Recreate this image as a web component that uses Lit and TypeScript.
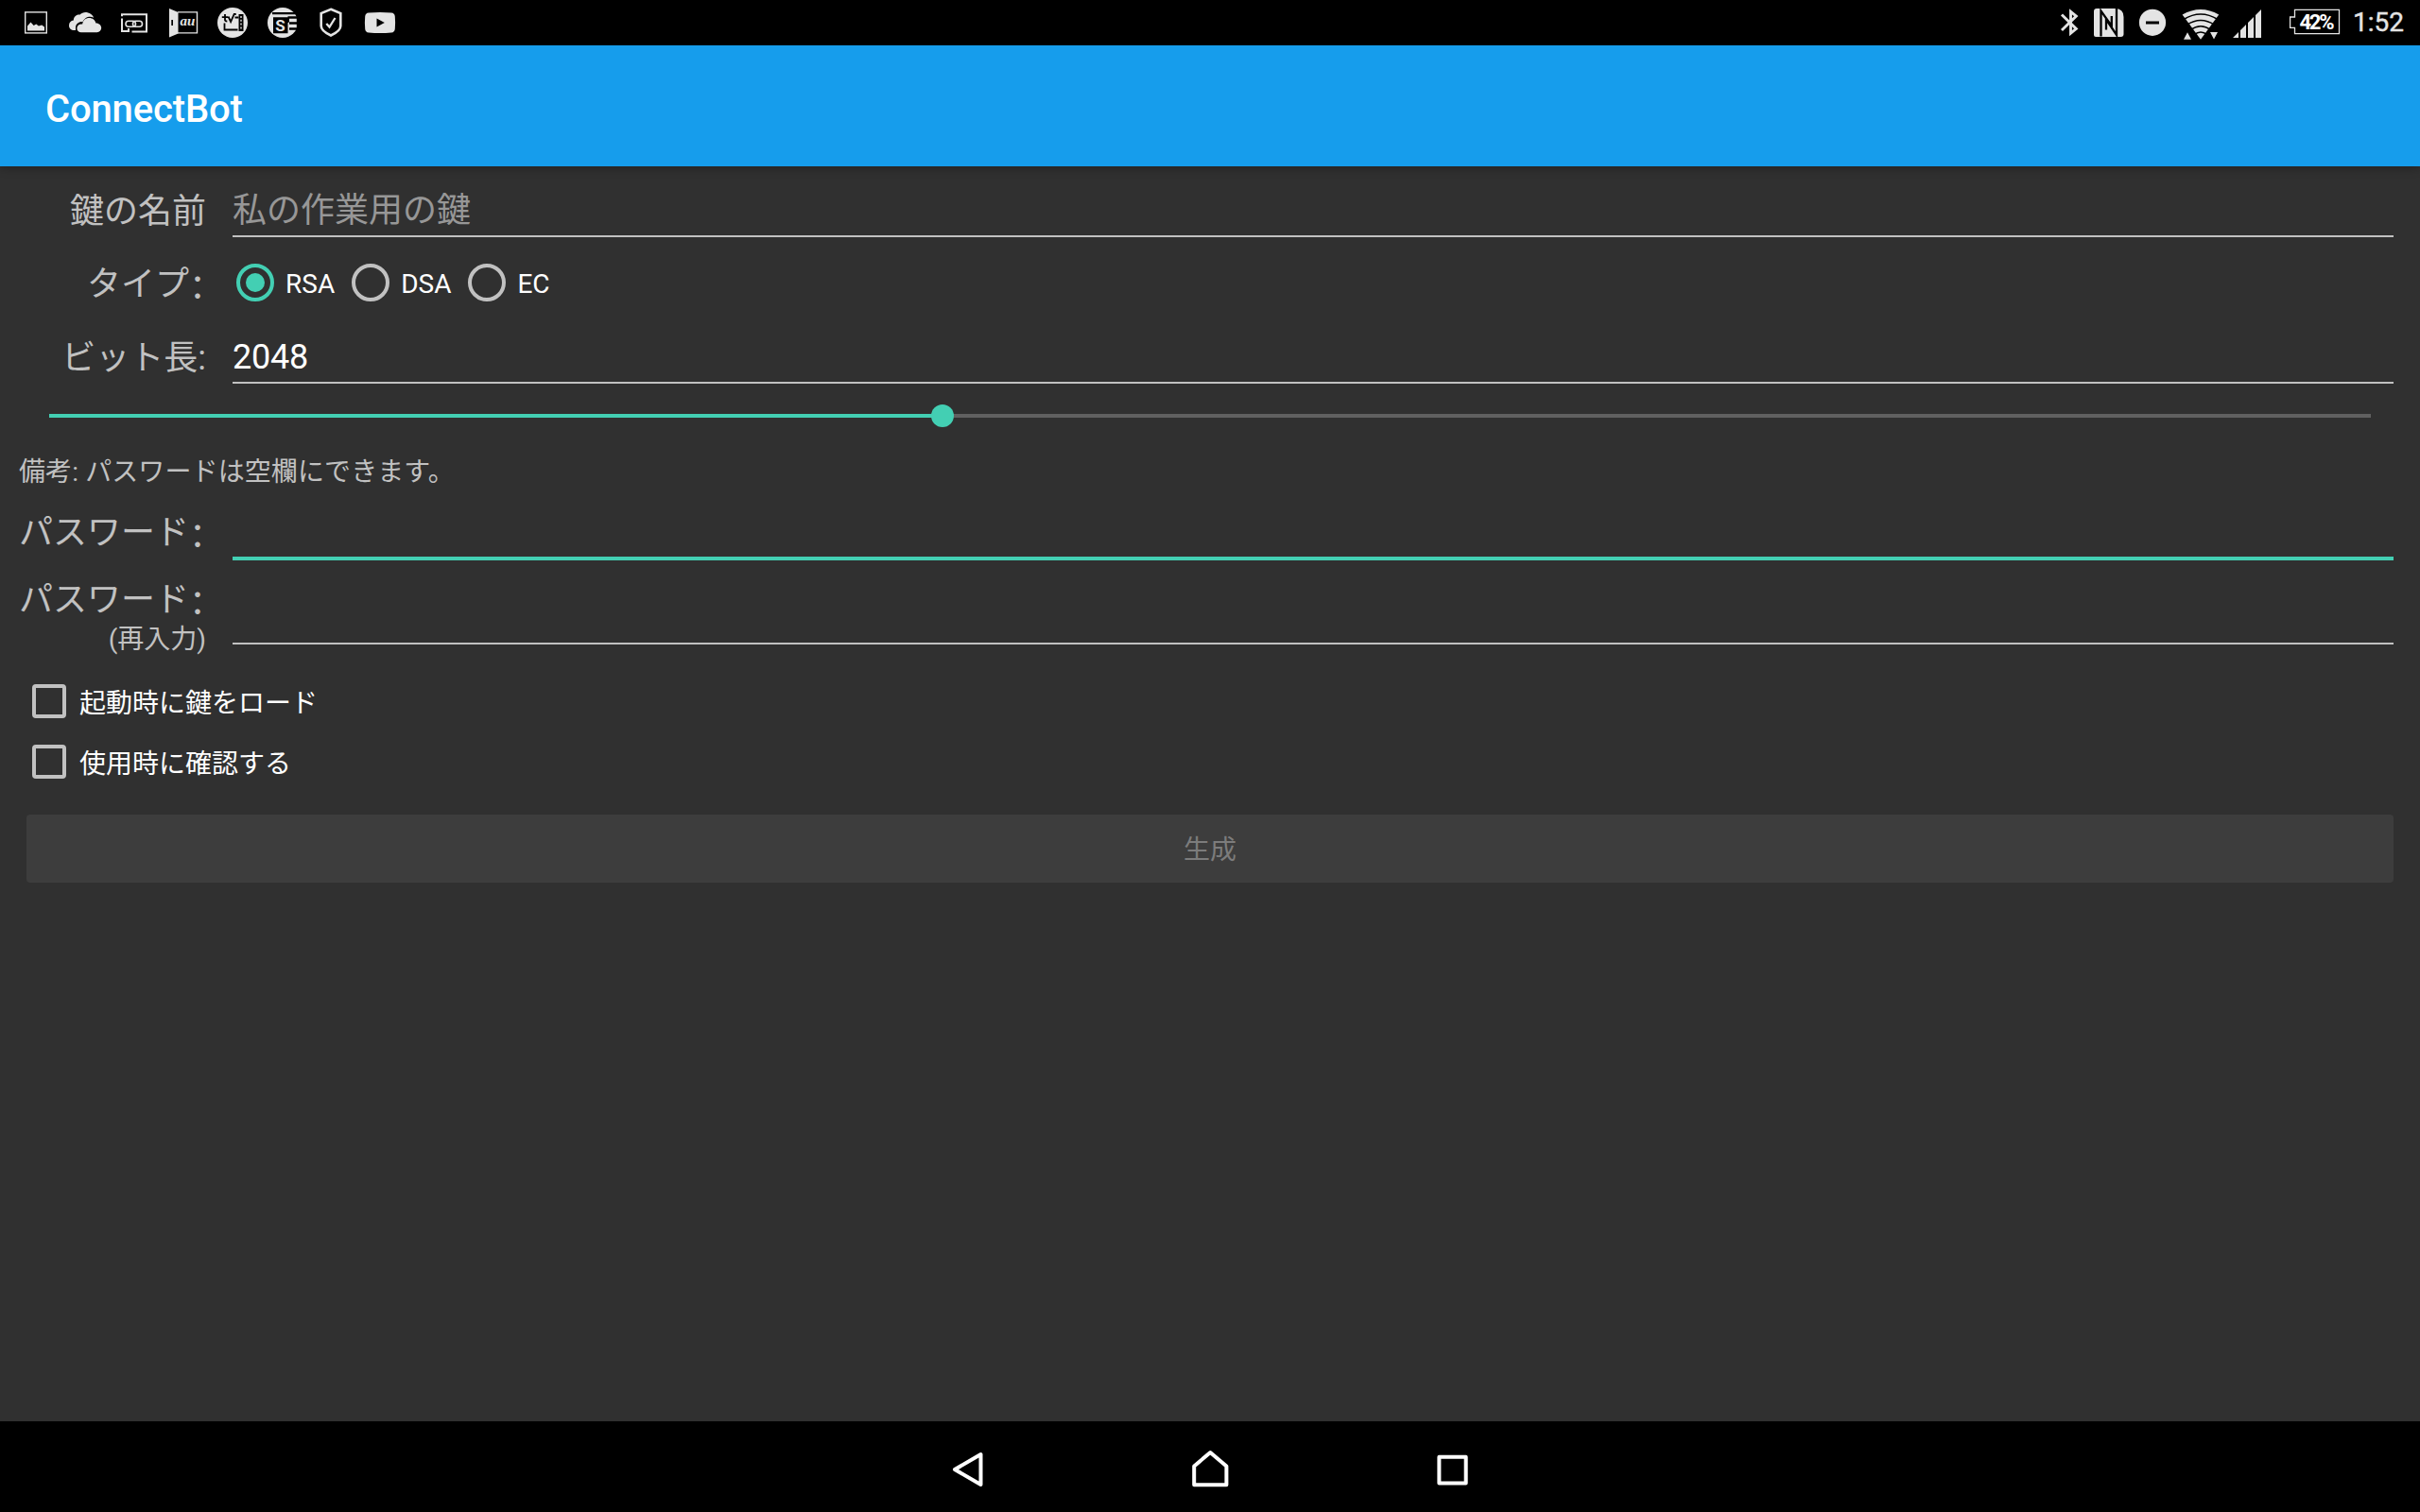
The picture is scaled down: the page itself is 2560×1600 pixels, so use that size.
import { LitElement, css, html, svg } from "lit";
import type { SVGTemplateResult } from "lit";
import { customElement, property, state } from "lit/decorators.js";
import { classMap } from "lit/directives/class-map.js";

interface StatusIcon {
  x: number;
  width: number;
  art: SVGTemplateResult;
}

// Every icon is a slice of one 48px high strip, x is where the slice starts.
const notifications: StatusIcon[] = [
  {
    x: 12,
    width: 52,
    art: svg`
      <rect class="line" x="26.7" y="12.9" width="22.6" height="22" stroke-width="1.4" />
      <path d="M29 32.5v-5l3.5-4 3.200 3.500 2.600-1.500 2.600 2 3.300-1 2.800 2v4z" />
    `,
  },
  {
    x: 64,
    width: 52,
    art: svg`
      <path d="M80 32h-2c-3 0-5-2.200-5-5 0-3 2-5.200 4.800-5.400C78 17.500 81 15 84.500 15.600 86.500 13.500 89.500 12.700 92.500 13.300c3.200.7 5.600 2.700 6.700 5.400-2.700-1.400-6.200-1.200-8.700.5-1.400 1-2.400 2.300-3 3.900-3.700-.6-7.300 2.300-7.500 5.800z" />
      <path d="M86 34.200c-2.700 0-4.600-1.800-4.600-4.300 0-2.600 2-4.500 4.700-4.500.3 0 .7 0 1.100.1.300-3.800 3.400-6.500 7.200-6.500 3.500 0 6.200 2.200 7 5.400 3.200-.2 5.800 2.200 5.800 5.200 0 2.700-2 4.600-4.600 4.600z" />
    `,
  },
  {
    x: 116,
    width: 52,
    art: svg`
      <path class="line" stroke-width="2" d="M129 17.200v-2h26V33.500h-15.500M129 19.500v13.500h7v-3" />
      <rect class="line" x="133" y="22.300" width="10.500" height="6" rx="3" stroke-width="1.600" />
      <rect class="line" x="140.500" y="22.300" width="10" height="6" rx="3" stroke-width="1.600" />
    `,
  },
  {
    x: 168,
    width: 52,
    art: svg`
      <path d="M179 9l9.500 4v22.500l-9.500 4z" />
      <path class="line" stroke-width="1.400" d="M188 12.900h20.500v22H188" />
      <path class="hole" d="M181.300 21h1.700v6h-1.700z" />
      <text class="au" x="190.500" y="27.300">au</text>
    `,
  },
  {
    x: 220,
    width: 52,
    art: svg`
      <circle cx="246" cy="24" r="16" />
      <path class="cut" stroke-width="1.800" d="M234.800 18.200h6.200M238 15v6q0 1.500 2.300 1.500M241.500 17.500l2.600 5.500 3.600-8h2M237.500 24.500v7h14M248.500 18.500h4" />
      <path class="hole" d="M252.500 15h5v18h-5z" />
      <path d="M254.300 17h1.400v2h-1.400zM254.300 20.800h1.400v2h-1.400zM254.300 24.600h1.400v2h-1.400zM254.300 28.400h1.400v2h-1.400z" />
    `,
  },
  {
    x: 272,
    width: 52,
    art: svg`
      <circle cx="299" cy="24" r="16" />
      <path class="hole" d="M288 13h28v2.300h-28zM289 18.300h15.500v17H289zM304.500 17.300h12v2.500h-10.500v3.500l-1.500 1zM306 23.300h10v2.500h-10zM306 29.300h10v2.500h-10zM313.800 12h3v25h-3z" />
      <text class="s-mark" x="296.600" y="33" text-anchor="middle">S</text>
    `,
  },
  {
    x: 324,
    width: 52,
    art: svg`
      <path class="line" stroke-width="2.600" d="M350 9.800l10.300 4.200v13.500c0 4.300-5.300 7.700-10.300 10-5-2.300-10.300-5.700-10.300-10V14z" />
      <path class="line" stroke-width="2.300" d="M345.300 25l3.200 3.500 6-9.500" />
    `,
  },
  {
    x: 376,
    width: 52,
    art: svg`
      <path d="M390 13.500q12-1 24 0 3.500.3 3.800 4 .6 6.500 0 13-.3 3.700-3.800 4-12 1-24 0-3.500-.3-3.800-4-.6-6.500 0-13 .3-3.700 3.800-4z" />
      <path class="hole" d="M398.500 19.500v9l8.300-4.500z" />
    `,
  },
];

const systemIcons: StatusIcon[] = [
  {
    x: 10,
    width: 35,
    art: svg`<path class="line" stroke-width="2.900" d="M21 15.500l15.300 15-5.800 4.700V12.300l5.800 4.700L21 32" />`,
  },
  {
    x: 45,
    width: 50,
    art: svg`
      <path d="M58 9h19q9.500 0 9.500 9v18q0 3-3 3H57q-2 0-2-2V12q0-3 3-3z" />
      <path class="cut" stroke-width="2.300" d="M62.500 38.500V11.500L73.800 27.500V17M68 31.500V20.500L79 37V9" />
    `,
  },
  {
    x: 95,
    width: 45,
    art: svg`
      <circle cx="117" cy="23.800" r="14.100" />
      <path class="hole" d="M110 22.500h14v3h-14z" />
    `,
  },
  {
    x: 140,
    width: 55,
    art: svg`
      <path d="M148.600 15.500Q168 4.500 187.200 15.500L168 41.700z" />
      <path class="cut" stroke-width="1.500" d="M150 20.500q18-11 36 0M153.500 26.300q14.500-9.500 29 0M157.500 31.500q10.500-7.500 21 0M161 36.800q7-5.500 14 0" />
      <path d="M150 41.700l4-7.500 4 7.500zM178 34h8l-4 7.500z" />
    `,
  },
  {
    x: 195,
    width: 55,
    art: svg`<path d="M202 40l6-6v6zM210 40v-8l6-6v14zM218 40V24l6-6v22zM226 40V16l6-6v30z" />`,
  },
  {
    x: 250,
    width: 75,
    art: svg`
      <path class="line" stroke-width="1.300" d="M267.500 10.300h47v25.400h-47v-6.400h-4.900V18h4.900z" />
      <text class="percent" x="272.500" y="30.500" textLength="37">42%</text>
    `,
  },
];

@customElement("status-bar")
export class StatusBar extends LitElement {
  static styles = css`
    :host {
      display: flex;
      justify-content: space-between;
      height: 48px;
      padding: 0 17px 0 12px;
      background: #000;
      color: #e4e4e4;
    }
    .group {
      display: flex;
      align-items: center;
    }
    svg {
      display: block;
      fill: #e4e4e4;
    }
    .line {
      fill: none;
      stroke: #e4e4e4;
    }
    .hole {
      fill: #000;
    }
    .cut {
      fill: none;
      stroke: #000;
    }
    .au {
      font: italic 700 15px "Liberation Serif", serif;
    }
    .s-mark {
      font: 700 17px Roboto, sans-serif;
    }
    .percent {
      fill: #fff;
      font: 700 22px Roboto, sans-serif;
    }
    .clock {
      width: 54px;
      margin-left: 4px;
      font: 400 28px/50px Roboto, sans-serif;
      white-space: nowrap;
      -webkit-text-stroke: 0.4px;
    }
  `;

  private icon({ x, width, art }: StatusIcon) {
    return html`<svg width=${width} height="48" viewBox="${x} 0 ${width} 48">
      ${art}
    </svg>`;
  }

  render() {
    return html`
      <div class="group">${notifications.map(this.icon)}</div>
      <div class="group">
        ${systemIcons.map(this.icon)}
        <span class="clock">1:52</span>
      </div>
    `;
  }
}

@customElement("form-field")
export class FormField extends LitElement {
  @property() value = "";
  @property() placeholder = "";
  @property({ type: Boolean, reflect: true }) active = false;

  static styles = css`
    :host {
      display: block;
      box-sizing: border-box;
      height: 58px;
      border-bottom: 2px solid #c1c1c1;
      color: #fff;
      font-size: 36px;
      line-height: 60px;
    }
    :host([active]) {
      border-bottom: 4px solid #43cfb3;
    }
    .value {
      letter-spacing: -0.2px;
    }
    .hint {
      color: #979797;
    }
  `;

  render() {
    return this.value
      ? html`<span class="value">${this.value}</span>`
      : html`<span class="hint">${this.placeholder}</span>`;
  }
}

@customElement("nav-bar")
export class NavBar extends LitElement {
  static styles = css`
    :host {
      display: flex;
      justify-content: center;
      height: 96px;
      background: #000;
    }
    svg {
      width: 256px;
      height: 96px;
      fill: none;
      stroke: #fff;
      stroke-width: 4;
      stroke-linejoin: round;
    }
  `;

  render() {
    return html`
      <svg viewBox="896 1504 256 96">
        <path d="M1010 1555l27.500-16v32z" />
      </svg>
      <svg viewBox="1152 1504 256 96">
        <path d="M1263.200 1571.200v-19.700l17.100-14.500 17.100 14.500v19.700z" />
      </svg>
      <svg viewBox="1408 1504 256 96">
        <rect x="1522.400" y="1541.800" width="28.300" height="27.800" />
      </svg>
    `;
  }
}

@customElement("app-root")
export class AppRoot extends LitElement {
  @state() private keyType = "RSA";
  @state() private bits = 2048;

  private minBits = 768;
  private maxBits = 4096;

  static styles = css`
    :host {
      display: flex;
      flex-direction: column;
      width: 2560px;
      height: 1600px;
      overflow: hidden;
      background: #303030;
      color: #c1c1c1;
      font-family: Roboto, "Noto Sans CJK JP", sans-serif;
      font-size: 28px;
    }
    .toolbar {
      height: 128px;
      padding-left: 48px;
      background: #169dec;
      box-shadow: 0 1px 10px rgba(0, 0, 0, 0.35);
      color: #fff;
      font-size: 40px;
      font-weight: 500;
      letter-spacing: -0.15px;
      line-height: 135px;
    }
    .form {
      flex: 1;
    }
    .row {
      display: grid;
      grid-template-columns: 198px 2286px;
      column-gap: 28px;
      align-items: center;
      padding-left: 20px;
    }
    .name {
      height: 92px;
    }
    .type {
      height: 62px;
    }
    .bits {
      height: 94px;
    }
    .password {
      height: 53px;
      align-items: start;
    }
    .again {
      height: 99px;
      padding-top: 18px;
      align-items: start;
    }
    .password form-field {
      height: 53px;
    }
    .again form-field {
      height: 71px;
    }
    .label {
      padding-top: 3px;
      font-size: 36px;
      line-height: 44px;
      text-align: right;
      white-space: nowrap;
    }
    .password .label,
    .again .label {
      padding-top: 2px;
    }
    .small {
      margin-top: -2px;
      font-size: 28px;
    }
    /* half-width form of the full-width colon */
    .colon {
      font-feature-settings: "halt";
      line-height: 0;
      vertical-align: -5px;
    }
    .radios {
      display: flex;
      padding-left: 4px;
      color: #fff;
    }
    .radio {
      display: flex;
      align-items: center;
      gap: 12px;
      margin-right: 18px;
    }
    .radio-text {
      padding-top: 2px;
    }
    .ring {
      display: grid;
      place-items: center;
      box-sizing: border-box;
      width: 40px;
      height: 40px;
      border: 4px solid #c1c1c1;
      border-radius: 50%;
    }
    .ring.on {
      border-color: #43cfb3;
    }
    .ring.on::after {
      content: "";
      width: 20px;
      height: 20px;
      border-radius: 50%;
      background: #43cfb3;
    }
    .slider {
      display: flex;
      align-items: center;
      height: 32px;
      margin: 0 52px;
    }
    .filled,
    .rest {
      height: 4px;
      background: #43cfb3;
    }
    .rest {
      flex: 1;
      background: #606060;
    }
    .thumb {
      width: 24px;
      height: 24px;
      margin: 0 -12px;
      border-radius: 50%;
      background: #43cfb3;
      z-index: 1;
    }
    .note {
      height: 84px;
      padding-left: 20px;
      letter-spacing: 0.1px;
      line-height: 87px;
    }
    .check {
      display: flex;
      align-items: center;
      gap: 14px;
      height: 64px;
      padding-left: 34px;
      color: #fff;
    }
    .box {
      box-sizing: border-box;
      width: 36px;
      height: 36px;
      border: 4px solid #c1c1c1;
      border-radius: 4px;
    }
    .generate {
      height: 72px;
      margin: 24px 28px 0;
      border-radius: 4px;
      background: #3d3d3d;
      color: #7c7c7c;
      line-height: 76px;
      text-align: center;
    }
  `;

  render() {
    const ratio = (this.bits - this.minBits) / (this.maxBits - this.minBits);
    return html`
      <status-bar></status-bar>
      <div class="toolbar">ConnectBot</div>
      <div class="form">
        <div class="row name">
          <div class="label">鍵の名前</div>
          <form-field placeholder="私の作業用の鍵"></form-field>
        </div>
        <div class="row type">
          <div class="label">タイプ<span class="colon">：</span></div>
          <div class="radios">
            ${["RSA", "DSA", "EC"].map(
              (type) => html`
                <div class="radio" @click=${() => (this.keyType = type)}>
                  <span
                    class=${classMap({ ring: true, on: type === this.keyType })}
                  ></span>
                  <span class="radio-text">${type}</span>
                </div>
              `
            )}
          </div>
        </div>
        <div class="row bits">
          <div class="label">ビット長:</div>
          <form-field value=${this.bits}></form-field>
        </div>
        <div class="slider">
          <div class="filled" style="width: ${ratio * 100}%"></div>
          <div class="thumb"></div>
          <div class="rest"></div>
        </div>
        <div class="note">備考: パスワードは空欄にできます。</div>
        <div class="row password">
          <div class="label">パスワード<span class="colon">：</span></div>
          <form-field active></form-field>
        </div>
        <div class="row again">
          <div class="label">
            パスワード<span class="colon">：</span>
            <div class="small">(再入力)</div>
          </div>
          <form-field></form-field>
        </div>
        ${["起動時に鍵をロード", "使用時に確認する"].map(
          (text) => html`
            <div class="check"><span class="box"></span><span>${text}</span></div>
          `
        )}
        <div class="generate">生成</div>
      </div>
      <nav-bar></nav-bar>
    `;
  }
}
